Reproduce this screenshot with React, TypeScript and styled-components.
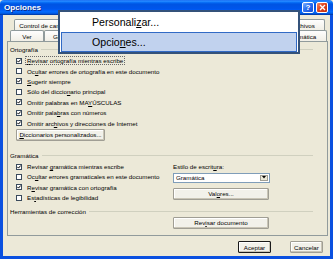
import styled, { createGlobalStyle } from "styled-components";

const FONT = `"Liberation Sans", Arial, sans-serif`;

const GlobalStyle = createGlobalStyle`
    html, body {
        margin: 0;
        padding: 0;
    }
    body {
        font-family: ${FONT};
        background: #ece9d8;
    }
`;

const Window = styled.div`
    position: relative;
    width: 333px;
    height: 259px;
    display: flex;
    flex-direction: column;
    overflow: hidden;
    font-family: ${FONT};
    font-size: 6.2px;
    color: #000;
`;

const TitleBar = styled.div`
    flex: none;
    height: 15px;
    box-sizing: border-box;
    display: flex;
    align-items: center;
    gap: 2px;
    padding: 0 5px 0 4px;
    border-radius: 4px 4px 0 0;
    background: linear-gradient(
        #0058ee 0%,
        #3a93ff 6%,
        #127dff 12%,
        #0262ee 20%,
        #0054e3 30%,
        #0055eb 56%,
        #005bf5 66%,
        #026afe 76%,
        #0062ef 86%,
        #0052d6 92%,
        #003092 100%
    );
`;

const Title = styled.span`
    flex: 1;
    color: #fff;
    font-weight: bold;
    font-size: 8.1px;
    text-shadow: 1px 1px 0 #0a2a8a;
`;

const CaptionButton = styled.div<{ $close?: boolean }>`
    width: 12px;
    height: 11px;
    box-sizing: border-box;
    border: 1px solid #fff;
    border-radius: 2px;
    display: flex;
    align-items: center;
    justify-content: center;
    color: #fff;
    font-weight: bold;
    font-size: 8px;
    background: ${(p) =>
        p.$close
            ? "linear-gradient(135deg, #f08a6a, #e0451f 45%, #c0300e)"
            : "linear-gradient(135deg, #7fb0ff, #2d6ff0 45%, #1650d8)"};
`;

const Frame = styled.div`
    flex: 1;
    display: flex;
    flex-direction: column;
    background: #ece9d8;
    border: 3px solid #0a50e0;
    border-top: none;
    padding: 4px 2px 3px 4px;
`;

const TabRow = styled.div<{ $indent: number }>`
    display: flex;
    height: 11px;
    margin-left: ${(p) => p.$indent}px;
`;

const Tab = styled.div<{ $w: number }>`
    width: ${(p) => p.$w}px;
    flex: none;
    box-sizing: border-box;
    border: 1px solid #919b9c;
    border-bottom: none;
    border-radius: 2px 2px 0 0;
    background: linear-gradient(#fefefe, #f1efe6);
    display: flex;
    align-items: center;
    justify-content: center;
    white-space: nowrap;
    overflow: hidden;
`;

const Panel = styled.div`
    height: 195px;
    box-sizing: border-box;
    border: 1px solid #919b9c;
    background: #ece9d8;
    padding: 3px 14px 0 2px;
`;

const SectionHeader = styled.div<{ $top: number }>`
    display: flex;
    align-items: center;
    gap: 3px;
    height: 8px;
    margin-top: ${(p) => p.$top}px;
`;

const SectionLine = styled.div`
    flex: 1;
    border-top: 1px solid #d0d0bf;
`;

const CheckList = styled.div<{ $top: number }>`
    display: flex;
    flex-direction: column;
    padding-left: 6px;
    margin-top: ${(p) => p.$top}px;
`;

const CheckRow = styled.div`
    display: flex;
    align-items: center;
    gap: 4px;
    height: 10.4px;
    white-space: nowrap;
`;

const Box = styled.div`
    width: 6px;
    height: 6px;
    box-sizing: border-box;
    border: 1px solid #3a4a5c;
    background: #fff;
    display: flex;
    align-items: center;
    justify-content: center;
`;

const CheckText = styled.span<{ $focus?: boolean }>`
    line-height: 7px;
    padding: 0 1px;
    outline: ${(p) => (p.$focus ? "1px dotted #6a6a6a" : "none")};
    outline-offset: 0;
`;

const Button = styled.div<{ $w: number; $default?: boolean }>`
    width: ${(p) => p.$w}px;
    height: 12px;
    box-sizing: border-box;
    border: 1px solid ${(p) => (p.$default ? "#1a1a1a" : "#a09e94")};
    border-radius: 1px;
    background: #f2f1ea;
    box-shadow: inset -1px -1px 0 #c9c5b6, inset 1px 1px 0 #fff;
    display: flex;
    align-items: center;
    justify-content: center;
    white-space: nowrap;
`;

const DictButton = styled(Button)`
    margin: 0.7px 0 0 6px;
`;

const Grid = styled.div<{ $top: number }>`
    display: grid;
    grid-template-columns: 157px 97px;
    padding-left: 6px;
    margin-top: ${(p) => p.$top}px;
`;

const LeftList = styled.div`
    display: flex;
    flex-direction: column;
`;

const RightColumn = styled.div`
    display: flex;
    flex-direction: column;
`;

const FieldLabel = styled.div`
    height: 8px;
    margin-top: 1.2px;
    display: flex;
    align-items: center;
`;

const Select = styled.div`
    margin-top: 2.3px;
    height: 10px;
    box-sizing: border-box;
    border: 1px solid #7f9db9;
    background: #fff;
    display: flex;
    align-items: center;
    padding: 0 1px 0 2px;
`;

const SelectValue = styled.span`
    flex: 1;
`;

const SelectArrow = styled.div`
    width: 8px;
    height: 6px;
    box-sizing: border-box;
    border: 1px solid #a09e94;
    background: #ece9d8;
    display: flex;
    align-items: center;
    justify-content: center;
`;

const ValoresButton = styled(Button)`
    margin-top: 5px;
`;

const ToolsButton = styled(Button)`
    grid-column: 2;
`;

const Footer = styled.div`
    display: flex;
    justify-content: flex-end;
    gap: 19px;
    margin-top: 5px;
    padding-right: 5px;
`;

const Menu = styled.div`
    position: absolute;
    left: 58px;
    top: 10px;
    width: 242px;
    height: 44px;
    box-sizing: border-box;
    border: 2px solid #34527a;
    background: #fff;
    font-size: 10.6px;
    display: flex;
    flex-direction: column;
`;

const MenuItem = styled.div<{ $hover?: boolean }>`
    height: 20px;
    box-sizing: border-box;
    margin: 0 1px;
    padding-left: 30px;
    display: flex;
    align-items: center;
    border: 1px solid ${(p) => (p.$hover ? "#316ac5" : "transparent")};
    background: ${(p) => (p.$hover ? "#c1d2ee" : "transparent")};
`;

const Tick = () => (
    <svg width="4" height="4" viewBox="0 0 4 4">
        <path d="M0.3 1.8 L1.5 3.1 L3.7 0.5" stroke="#000" strokeWidth="1" fill="none" />
    </svg>
);

const Check = ({ checked, focus, children }: { checked?: boolean; focus?: boolean; children: React.ReactNode }) => (
    <CheckRow>
        <Box>{checked && <Tick />}</Box>
        <CheckText $focus={focus}>{children}</CheckText>
    </CheckRow>
);

const App = () => {
    return (
        <Window>
            <GlobalStyle />
            <TitleBar>
                <Title>Opciones</Title>
                <CaptionButton>?</CaptionButton>
                <CaptionButton $close>
                    <svg width="7" height="7" viewBox="0 0 7 7">
                        <path d="M1 1 L6 6 M6 1 L1 6" stroke="#fff" strokeWidth="1.4" />
                    </svg>
                </CaptionButton>
            </TitleBar>
            <Frame>
                <TabRow $indent={7}>
                    <Tab $w={64}>Control de cambios</Tab>
                    <Tab $w={96}>Información del usuario</Tab>
                    <Tab $w={70}>Compatibilidad</Tab>
                    <Tab $w={81}>Ubicación de archivos</Tab>
                </TabRow>
                <TabRow $indent={3}>
                    <Tab $w={34}>Ver</Tab>
                    <Tab $w={40}>General</Tab>
                    <Tab $w={36}>Edición</Tab>
                    <Tab $w={38}>Imprimir</Tab>
                    <Tab $w={38}>Guardar</Tab>
                    <Tab $w={48}>Seguridad</Tab>
                    <Tab $w={83}>Ortografía y gramática</Tab>
                </TabRow>
                <Panel>
                    <SectionHeader $top={0}>
                        <span>Ortografía</span>
                        <SectionLine />
                    </SectionHeader>
                    <CheckList $top={2.5}>
                        <Check checked focus><u>R</u>evisar ortografía mientras escribe</Check>
                        <Check>Oc<u>u</u>ltar errores de ortografía en este documento</Check>
                        <Check checked><u>S</u>ugerir siempre</Check>
                        <Check>Sólo del diccio<u>n</u>ario principal</Check>
                        <Check checked>Omitir palabras en MA<u>Y</u>ÚSCULAS</Check>
                        <Check checked>Omitir pala<u>b</u>ras con números</Check>
                        <Check checked>Omitir arc<u>h</u>ivos y direcciones de Internet</Check>
                    </CheckList>
                    <DictButton $w={89}><span><u>D</u>iccionarios personalizados...</span></DictButton>
                    <SectionHeader $top={10.7}>
                        <span>Gramática</span>
                        <SectionLine />
                    </SectionHeader>
                    <Grid $top={1.8}>
                        <LeftList>
                            <Check checked>Revisar <u>g</u>ramática mientras escribe</Check>
                            <Check>Oc<u>u</u>ltar errores gramaticales en este documento</Check>
                            <Check checked>R<u>e</u>visar gramática con ortografía</Check>
                            <Check>Es<u>t</u>adísticas de legibilidad</Check>
                        </LeftList>
                        <RightColumn>
                            <FieldLabel><span>Estilo de escrit<u>u</u>ra:</span></FieldLabel>
                            <Select>
                                <SelectValue>Gramática</SelectValue>
                                <SelectArrow>
                                    <svg width="4" height="3" viewBox="0 0 4 3">
                                        <path d="M0 0 H4 L2 2.5 Z" fill="#000" />
                                    </svg>
                                </SelectArrow>
                            </Select>
                            <ValoresButton $w={96}><span>Val<u>o</u>res...</span></ValoresButton>
                        </RightColumn>
                    </Grid>
                    <SectionHeader $top={4.6}>
                        <span>Herramientas de corrección</span>
                        <SectionLine />
                    </SectionHeader>
                    <Grid $top={1.3}>
                        <ToolsButton $w={96}><span>Rev<u>i</u>sar documento</span></ToolsButton>
                    </Grid>
                </Panel>
                <Footer>
                    <Button $w={33} $default>Aceptar</Button>
                    <Button $w={33}>Cancelar</Button>
                </Footer>
            </Frame>
            <Menu>
                <MenuItem>
                    <span>Personali<u>z</u>ar...</span>
                </MenuItem>
                <MenuItem $hover>
                    <span>Opcio<u>n</u>es...</span>
                </MenuItem>
            </Menu>
        </Window>
    );
};

export default App;
